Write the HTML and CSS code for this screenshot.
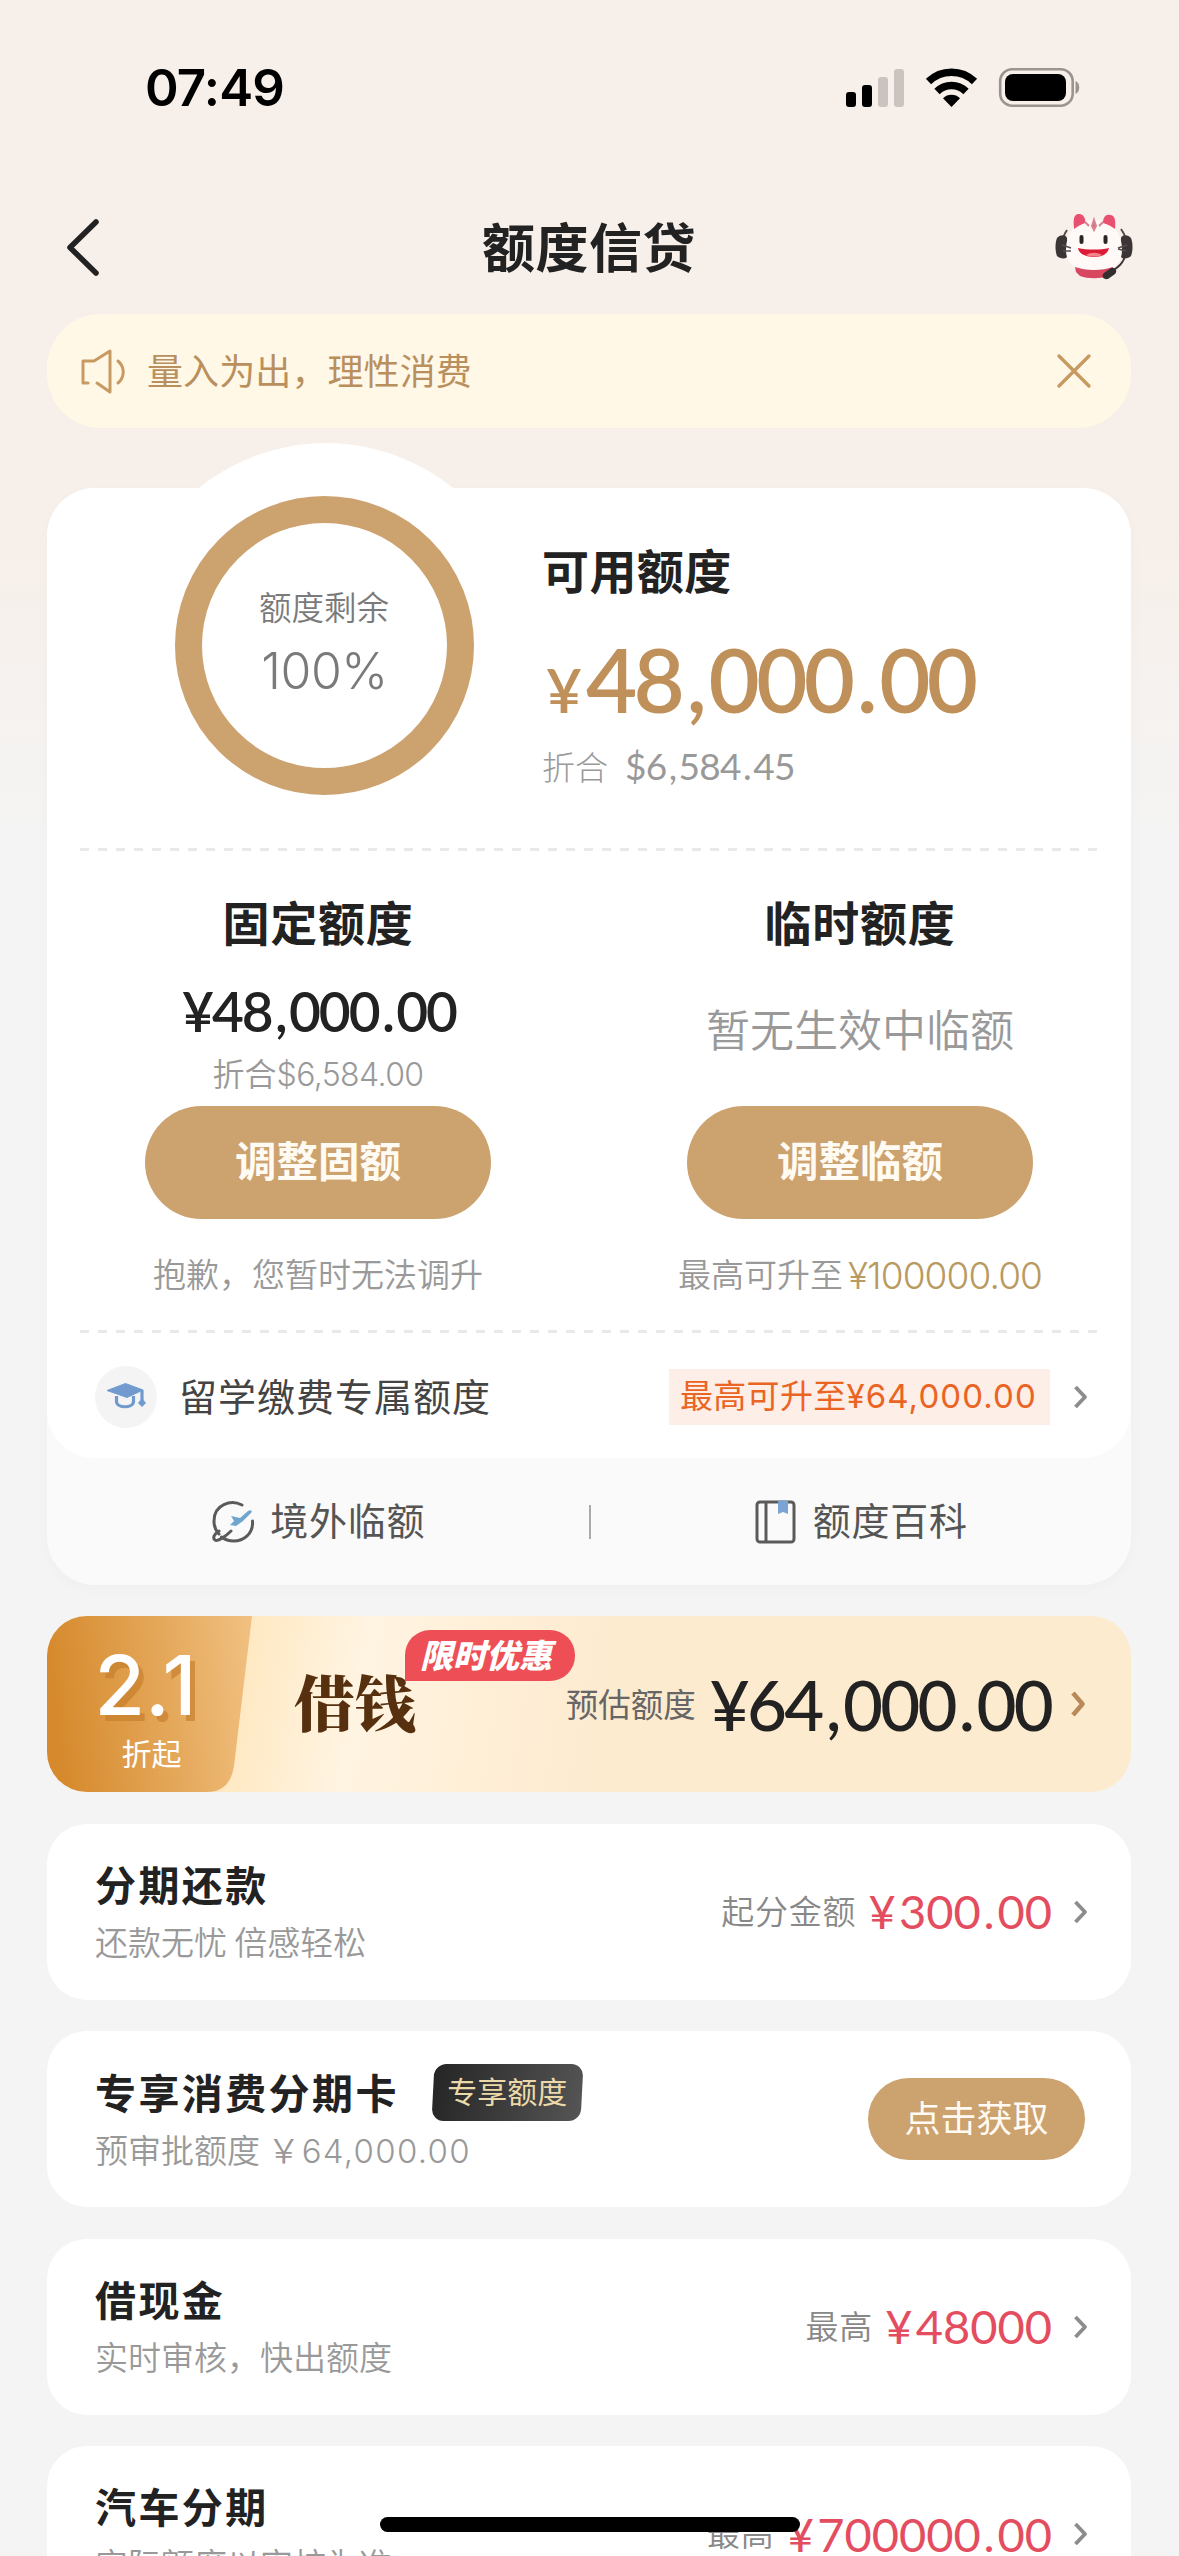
FILE: index.html
```html
<!DOCTYPE html>
<html lang="zh-CN">
<head>
<meta charset="utf-8">
<title>额度信贷</title>
<link rel="stylesheet" href="styles.css">
</head>
<body>
<div class="screen">
  <div class="status">
    <span class="time">07:49</span>
    <svg class="status-icons" width="238" height="42" viewBox="0 0 238 42">
      <rect x="1" y="25" width="10" height="15" rx="3"/>
      <rect x="17" y="18" width="10" height="22" rx="3"/>
      <rect x="33" y="10" width="10" height="30" rx="3" fill="#cbc3bf"/>
      <rect x="49" y="2" width="10" height="38" rx="3" fill="#cbc3bf"/>
      <g fill="none" stroke="#000" stroke-width="7.5">
        <path d="M83.500 14.500a33 33 0 0 1 46 0"/>
        <path d="M92 24.500a20.500 20.500 0 0 1 29 0"/>
      </g>
      <path d="M106.500 40l-8.500-8.800a12.500 12.500 0 0 1 17 0z"/>
      <rect x="155.200" y="2.200" width="72.500" height="36.500" rx="12" fill="none" stroke="#9a938f" stroke-width="2.600"/>
      <rect x="160" y="7" width="61" height="27" rx="8"/>
      <path d="M230.500 14c5 1.500 5 11.500 0 13z" fill="#9a938f"/>
    </svg>
  </div>
  <header class="nav">
    <svg class="back" width="40" height="60" viewBox="0 0 40 60"><path d="M33 4L7 29.500l26 25.500" fill="none" stroke="#222" stroke-width="5.500" stroke-linecap="round" stroke-linejoin="round"/></svg>
    <h1>额度信贷</h1>
    <svg class="mascot" width="78" height="70" viewBox="0 0 78 70">
      <path d="M12 17C7 24 7 30 7 34M66 16c5 7 6 12 6 18" fill="none" stroke="#55494a" stroke-width="2"/>
      <path d="M2 25c4-4 9-3 10 0l1 17c-1 5-8 4-11 1-2-5-2-13 0-18zM76 25c-4-4-9-3-10 0l-1 17c1 5 8 4 11 1 2-5 2-13 0-18z" fill="#3b3536"/>
      <path d="M39 7c18 0 28 13 28 30 0 15-10 22-28 22S11 52 11 37C11 20 21 7 39 7z" fill="#fff9f8"/>
      <path d="M19 14C18 6 19 0 25 1c4 1 6 5 5 9-3 1-7 3-11 6zM48 10c0-6 3-9 7-8 5 0 6 6 5 14-4-3-8-5-12-6z" fill="#e9506f"/>
      <path d="M20 54c11 4 27 4 38 0l-1 5-4 4c-8 3-20 3-28 0l-4-4z" fill="#d94660"/>
      <path d="M39 7l2 6-2 4-2-4zM30 9l4 4M48 9l-4 4" fill="#cf6d7b" stroke="#d98390" stroke-width="2"/>
      <path d="M23 35c9 2 22 2 31 0-1 6-7 9-15 9s-15-3-16-9z" fill="#dc1c36"/>
      <path d="M31 42c5-3 11-3 16 0-5 2-11 2-16 0z" fill="#f4828b"/>
      <rect x="24.500" y="22" width="4" height="9" rx="2" fill="#2a2628"/><rect x="48.500" y="22" width="4" height="9" rx="2" fill="#2a2628"/>
      <path d="M7 32l9 3M8 38h8M72 32l-9 3M71 38l-8-2" stroke="#574a4c" stroke-width="1.500"/>
      <path d="M70 42c-1 8-7 12-14 17" fill="none" stroke="#3b3536" stroke-width="2"/>
      <path d="M49 60l7-5c4-1 7 3 4 6l-7 5c-5 1-7-3-4-6z" fill="#332e2f"/>
    </svg>
  </header>

  <div class="notice">
    <svg width="46" height="46" viewBox="0 0 46 46" fill="none" stroke="#c79a62" stroke-width="3" stroke-linejoin="round" stroke-linecap="round"><path d="M8 35H3V13h11L30 3v41l-13-9M38 13c7 6 7 16 0 22"/></svg>
    <span>量入为出，理性消费</span>
    <svg class="close" width="36" height="36" viewBox="0 0 36 36"><path d="M3 3l30 30M33 3L3 33" stroke="#c79a62" stroke-width="3.400" stroke-linecap="round"/></svg>
  </div>

  <section class="quota">
    <div class="quota-body">
      <div class="available">
        <div class="ring"><span class="ring-label">额度剩余</span><span class="ring-value">100%</span></div>
        <div class="available-info">
          <h2>可用额度</h2>
          <div class="available-amount"><span class="yen">¥</span><span class="sum">48<i>,</i>000<i>.</i>00</span></div>
          <div class="foreign"><span>折合</span><span class="usd">$6<i>,</i>584<i>.</i>45</span></div>
        </div>
      </div>
      <div class="dash"></div>
      <div class="split">
        <div class="col">
          <h2>固定额度</h2>
          <div class="fixed-amount">¥48<i>,</i>000<i>.</i>00</div>
          <div class="fixed-foreign">折合<span>$6,584.00</span></div>
          <div class="btn">调整固额</div>
          <div class="hint">抱歉，您暂时无法调升</div>
        </div>
        <div class="col">
          <h2>临时额度</h2>
          <div class="none">暂无生效中临额</div>
          <div class="btn">调整临额</div>
          <div class="hint">最高可升至<span class="hint-num">¥100000.00</span></div>
        </div>
      </div>
      <div class="dash"></div>
      <div class="study">
        <svg class="cap" width="62" height="62" viewBox="0 0 62 62">
          <circle cx="31" cy="31" r="31" fill="#f4f4f5"/>
          <path d="M12 24.500L30.500 17.500 48 24l-16 7.500z" fill="#719bce" stroke="#719bce" stroke-linejoin="round"/>
          <path d="M47 24v10M21.500 30v5.500c0 7 17 7 17 0V30" fill="none" stroke="#719bce" stroke-width="3.200"/>
          <path d="M47 32l4 5-4 4-4-4z" fill="#719bce"/>
        </svg>
        <span class="study-title">留学缴费专属额度</span>
        <span class="study-tag">最高可升至<span>¥64,000.00</span></span>
        <svg class="chev" width="18" height="28" viewBox="0 0 18 28"><path d="M3.500 4l9.500 10-9.500 10"/></svg>
      </div>
    </div>
    <div class="links">
      <div class="link">
        <svg width="44" height="44" viewBox="0 0 44 44" fill="none" stroke="#5a5a5a" stroke-width="3" stroke-linecap="round">
          <path d="M31 5C20-.5 3 4 3 21c0 6 2 10 5 13M41.500 21c1 13-9 20-19 20-5 0-8-1-12-4M20 31C15 36 7 42 4 40c-3-2 0-7 4-9"/>
          <path d="M20 16l9 2 8-7c3-2 5 0 3 2l-8 8-7 5-6-1 4-4z" fill="#70a5ce" stroke="none"/>
        </svg><span>境外临额</span>
      </div>
      <em class="bar"></em>
      <div class="link">
        <svg width="44" height="46" viewBox="0 0 44 46" fill="none" stroke="#5a5a5a" stroke-width="3">
          <rect x="3" y="3" width="37" height="40" rx="3"/><path d="M12 3v40"/><path d="M24 1.500h10V15l-5-2-5 2z" fill="#7aa4d3" stroke="none"/>
        </svg><span>额度百科</span>
      </div>
    </div>
  </section>

  <section class="loan">
    <svg class="loan-tab" width="206" height="176" viewBox="0 0 206 176">
      <defs><linearGradient id="g" x1="0" x2="1" y1=".1" y2="0"><stop offset="0" stop-color="#d68a2d"/><stop offset=".5" stop-color="#e3a556"/><stop offset="1" stop-color="#f1c182"/></linearGradient></defs>
      <path d="M0 0H205L187 150C184 169 174 176 160 176H0z" fill="url(#g)"/>
    </svg>
    <div class="discount"><b>2.1</b><span>折起</span></div>
    <div class="loan-name">借钱<span class="promo">限时优惠</span></div>
    <span class="loan-label">预估额度</span>
    <span class="loan-num">¥64<i>,</i>000<i>.</i>00</span>
    <svg class="chev gold" width="20" height="30" viewBox="0 0 20 30"><path d="M4 4l9.500 11L4 26"/></svg>
  </section>

  <section class="item">
    <div class="item-main"><h3>分期还款</h3><p>还款无忧 倍感轻松</p></div>
    <span class="item-label">起分金额</span><span class="item-num"><b>¥</b>300<i>.</i>00</span>
    <svg class="chev" width="18" height="28" viewBox="0 0 18 28"><path d="M3.500 4l9.500 10-9.500 10"/></svg>
  </section>
  <section class="item">
    <div class="item-main">
      <h3>专享消费分期卡<span class="vip">专享额度</span></h3>
      <p>预审批额度 <span class="pre">￥64,000.00</span></p>
    </div>
    <div class="get">点击获取</div>
  </section>
  <section class="item">
    <div class="item-main"><h3>借现金</h3><p>实时审核，快出额度</p></div>
    <span class="item-label">最高</span><span class="item-num"><b>¥</b>48000</span>
    <svg class="chev" width="18" height="28" viewBox="0 0 18 28"><path d="M3.500 4l9.500 10-9.500 10"/></svg>
  </section>
  <section class="item">
    <div class="item-main"><h3>汽车分期</h3><p>实际额度以审核为准</p></div>
    <span class="item-label">最高</span><span class="item-num"><b>¥</b>700000<i>.</i>00</span>
    <svg class="chev" width="18" height="28" viewBox="0 0 18 28"><path d="M3.500 4l9.500 10-9.500 10"/></svg>
  </section>
  <div class="home"></div>
</div>
</body>
</html>
```
FILE: styles.css
```css
* { box-sizing: border-box; margin: 0; padding: 0; }
body { width: 1179px; height: 2556px; overflow: hidden; }
.screen {
  position: relative;
  height: 2556px;
  overflow: hidden;
  padding: 0 48px 0 47px;
  background: linear-gradient(#f7efe9 0, #f7efe9 520px, #f4f4f4 850px);
  font-family: "Noto Sans CJK SC", sans-serif;
  color: #222;
  white-space: nowrap;
}
svg { display: block; flex: none; }
/* punctuation inside amounts gets extra room */
i { font-style: normal; margin: 0 .06em; }

.status { height: 190px; padding: 67px 48px 0 98px; display: flex; justify-content: space-between; align-items: flex-start; }
.time { font: 600 51px/42px Inter, sans-serif; letter-spacing: -.8px; color: #000; }

.nav { height: 124px; display: flex; align-items: center; justify-content: space-between; padding: 0 0 8px 16px; margin-right: -2px; }
.nav h1 { font-size: 53px; font-weight: 700; line-height: 60px; letter-spacing: .5px; margin: -6px 0 0 20px; }

.notice { height: 114px; border-radius: 54px; background: #fff8e7; display: flex; align-items: center; padding: 0 39px 0 33px; font-size: 36px; color: #b98f5e; }
.notice span { margin-left: 21px; line-height: 50px; letter-spacing: .1px; margin-top: -4px; }
.close { margin-left: auto; }

.quota { margin-top: 60px; height: 1097px; border-radius: 48px; background: #fafafa; position: relative; box-shadow: 0 4px 14px rgba(0,0,0,.025); }
.quota::before { content: ""; position: absolute; left: 77px; top: -45px; width: 404px; height: 404px; border-radius: 50%; background: #fff; }
.quota-body { position: relative; height: 970px; border-radius: 48px; background: #fff; }
.available { height: 360px; display: flex; padding: 8px 0 0 128px; }
.ring { width: 299px; height: 299px; border: 27px solid #cca26f; border-radius: 50%; display: flex; flex-direction: column; align-items: center; color: #7a7a7a; padding-top: 61px; }
.ring-label { font-size: 32.500px; line-height: 44px; font-weight: 350; margin-left: -1px; }
.ring-value { font: 350 50px/60px Inter, sans-serif; margin-top: 13px; letter-spacing: -.5px; }
.available-info { margin-left: 68px; }
.available-info h2 { font-size: 47px; line-height: 70px; margin-top: 38px; letter-spacing: .4px; }
h2 { font-weight: 700; color: #222; }
.available-amount { display: flex; align-items: baseline; height: 126px; line-height: 151px; font-family: Lato, sans-serif; color: #c0905b; padding-left: 4px; }
.yen { font-size: 62px; font-weight: 600; width: 40px; letter-spacing: 0; }
.sum { font-size: 88.500px; font-weight: 600; letter-spacing: -.042em; }
.foreign { display: flex; align-items: center; height: 60px; margin-top: 6px; font-size: 33px; color: #999; font-weight: 300; }
.usd { font: 400 37px/62px Lato, sans-serif; margin-left: 17px; letter-spacing: -.02em; }

.dash { height: 3px; margin: 0 33px; background: repeating-linear-gradient(90deg, #e9e9e9 0 9px, transparent 9px 18px); }
.split { height: 479px; display: grid; grid-template-columns: 1fr 1fr; }
.col { display: flex; flex-direction: column; align-items: center; }
.col h2 { font-size: 47px; line-height: 60px; letter-spacing: .8px; margin-top: 40px; }
.fixed-amount { font: 600 55px/70px Lato, sans-serif; letter-spacing: -.037em; margin: 25px 0 0 2px; }
.fixed-foreign { font-size: 32px; line-height: 44px; margin-top: 4px; color: #999; font-weight: 350; }
.fixed-foreign span { font-family: Inter, sans-serif; font-weight: 300; letter-spacing: -.6px; }
.btn { width: 346px; height: 113px; margin-top: auto; flex: none; border-radius: 57px; background: #cca26f; color: #fffaf2; font-size: 41.500px; font-weight: 700; text-align: center; line-height: 107px; }
.none { font-size: 44px; line-height: 60px; margin-top: 47px; color: #999; font-weight: 350; }
.hint { height: 111px; padding-top: 29px; font-size: 33px; line-height: 50px; color: #999; font-weight: 350; display: flex; }
.hint-num { font: 300 37px/56px Inter, sans-serif; margin-left: 5px; color: #b99a60; letter-spacing: -.900px; }

.study { height: 125px; display: flex; align-items: center; padding: 3px 41px 0 48px; }
.study-title { font-size: 38px; line-height: 50px; letter-spacing: 1px; margin: -4px auto 0 22px; color: #444; }
.study-tag { width: 381px; height: 56px; background: #fdeee7; color: #ea6423; font-size: 33px; line-height: 51px; padding-left: 11px; letter-spacing: .3px; display: flex; }
.study-tag span { font: 400 33px/55px Inter, sans-serif; letter-spacing: 1.100px; }
.chev { fill: none; stroke: #8c8c8c; stroke-width: 3.800; margin-left: 22px; stroke-linejoin: round; }

.links { height: 127px; display: flex; align-items: center; position: relative; padding-left: 1px; }
.link { flex: 1; display: flex; justify-content: center; align-items: center; gap: 15px; font-size: 38px; letter-spacing: .8px; color: #555; }
.link span { line-height: 50px; margin-top: -5px; }
.bar { width: 2px; height: 34px; background: #aaa; }

.loan { margin-top: 31px; height: 176px; border-radius: 40px; background: linear-gradient(100deg, #ffe5b8 15%, #fff4e2 29%, #ffefd7 40%, #fdebd0 52%); position: relative; display: flex; align-items: center; padding-right: 42px; }
.loan-tab { position: absolute; left: 0; top: 0; border-radius: 40px 0 0 40px; }
.discount { position: relative; width: 206px; height: 176px; padding-right: 9px; display: flex; flex-direction: column; align-items: center; color: #fff; }
.discount b { font: 500 82px/82px Inter, sans-serif; letter-spacing: 0; margin-top: 29px; text-shadow: 5px 6px 0 rgba(196,125,41,.65); }
.discount span { font-size: 30px; line-height: 40px; margin-top: 5px; padding-left: 12px; }
.loan-name { position: relative; margin: -6px 0 0 41px; font: 900 61px/80px "Noto Serif CJK SC", "Noto Sans CJK SC", serif; color: #57300f; }
.promo { position: absolute; left: 111px; top: -31px; width: 170px; height: 51px; padding-right: 8px; border-radius: 25px 25px 25px 0; background: #ee4f57; color: #fff; font: italic 900 33px/48px "Noto Sans CJK SC", sans-serif; text-align: center; }
.loan-label { margin: -4px 0 0 auto; font-size: 32.500px; color: #666; }
.loan-num { font: 500 69px/80px Lato, sans-serif; margin: 1px 0 0 14px; letter-spacing: -.040em; }
.chev.gold { stroke: #b98a57; stroke-width: 4.600; margin-left: 18px; }

.item { margin-top: 31.500px; height: 176px; border-radius: 40px; background: #fff; display: flex; align-items: center; padding: 0 41px 0 48px; }
.item-main { margin-right: auto; align-self: flex-start; padding-top: 29px; }
.item h3 { font-size: 41px; font-weight: 600; line-height: 60px; letter-spacing: 2.400px; display: flex; align-items: center; }
.item p { font-size: 33px; line-height: 50px; margin-top: 3px; font-weight: 350; color: #999; }
.item-label { font-size: 33px; letter-spacing: .8px; color: #888; font-weight: 350; margin-top: -4px; }
.item-num { font: 400 47px/60px Lato, sans-serif; color: #e44d5f; margin: -1px -2px 0 12px; }
.item-num b { font-weight: 400; margin-right: .07em; }
.vip { position: relative; z-index: 0; width: 151px; height: 57px; margin: 4px 0 0 33px; text-align: center; font-size: 30px; font-weight: 400; letter-spacing: 0; line-height: 53px; color: #ecd9a9; }
.vip::before { content: ""; position: absolute; z-index: -1; inset: 0 1px; border-radius: 12px; background: linear-gradient(100deg, #252525, #555); transform: skewX(-3deg); }
.pre { font-family: Inter, "Noto Sans CJK SC", sans-serif; font-weight: 350; letter-spacing: 1.300px; }
.get { width: 217px; height: 82px; border-radius: 41px; background: #cca26f; color: #fffaf2; font-size: 36px; line-height: 76px; text-align: center; margin-right: 5px; }
.home { position: absolute; left: 380px; top: 2517px; width: 420px; height: 15px; border-radius: 8px; background: #000; }
```
